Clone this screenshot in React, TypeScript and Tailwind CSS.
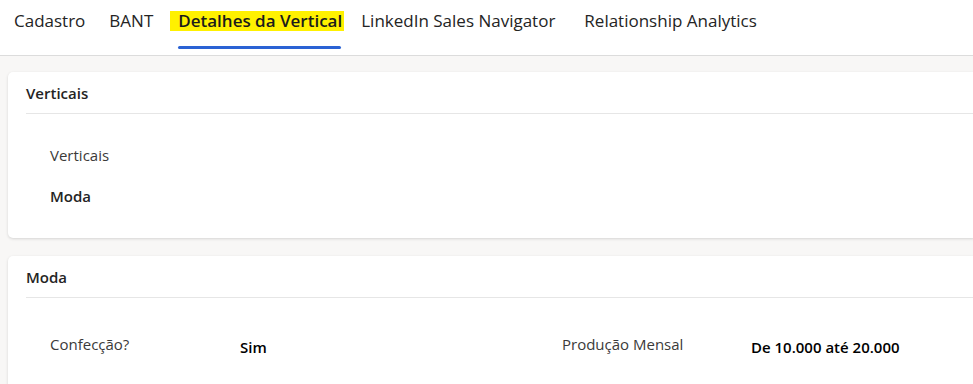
const font = { fontFamily: '"Open Sans", "Noto Sans", sans-serif' }

const tabs = [
  { label: 'Cadastro', gap: 'ml-0' },
  { label: 'BANT', gap: 'ml-[24px]' },
  { label: 'Detalhes da Vertical', gap: 'ml-[17px]', active: true },
  { label: 'LinkedIn Sales Navigator', gap: 'ml-[17px]' },
  { label: 'Relationship Analytics', gap: 'ml-[29px]' },
]

function Tab({ label, active, gap }: { label: string; active?: boolean; gap: string }) {
  return (
    <div className={`relative flex h-full items-start pt-[11px] ${gap}`}>
      {active ? (
        <>
          <span className="bg-[#fff100] pl-2 pr-[2px] text-[17px] font-semibold leading-[20px] text-[#1b1b1b]">{label}</span>
          <div className="absolute bottom-[6px] left-2 right-[3px] h-[3px] rounded-sm bg-[#2a62d4]" />
        </>
      ) : (
        <span className="text-[17px] leading-[20px] text-[#242424]">{label}</span>
      )}
    </div>
  )
}

function Card({ title, children }: { title: string; children: React.ReactNode }) {
  return (
    <section className="mr-[-12px] rounded-[5px] bg-white shadow-[0_1px_3px_rgba(0,0,0,0.14)]">
      <div className="ml-[18px] flex h-[42px] items-center border-b border-[#e6e6e6] pt-[1px] text-[15px] font-semibold text-[#242424]">
        {title}
      </div>
      {children}
    </section>
  )
}

export default function App() {
  return (
    <div className="h-[384px] w-full overflow-hidden bg-[#f8f7f6]" style={font}>
      <nav className="flex h-[56px] items-stretch border-b border-[#dcdcdc] bg-white pl-[14px]">
        {tabs.map(t => (
          <Tab key={t.label} label={t.label} active={t.active} gap={t.gap} />
        ))}
      </nav>

      <div className="flex flex-col gap-[18px] px-2 pt-[16px]">
        <Card title="Verticais">
          <div className="px-[42px] pb-[32px] pt-[31px] text-[15px] leading-[20px]">
            <div className="text-[#3b3a39]">Verticais</div>
            <div className="mt-[21px] font-semibold text-[#242424]">Moda</div>
          </div>
        </Card>

        <Card title="Moda">
          <div className="grid grid-cols-[190px_322px_189px_1fr] items-start px-[42px] pt-[36px] pb-[40px] text-[15px] leading-[20px]">
            <div className="text-[#3b3a39]">Confecção?</div>
            <div className="mt-[3px] font-semibold text-black">Sim</div>
            <div className="text-[#3b3a39]">Produção Mensal</div>
            <div className="mt-[3px] font-semibold text-black">De 10.000 até 20.000</div>
          </div>
        </Card>
      </div>
    </div>
  )
}
